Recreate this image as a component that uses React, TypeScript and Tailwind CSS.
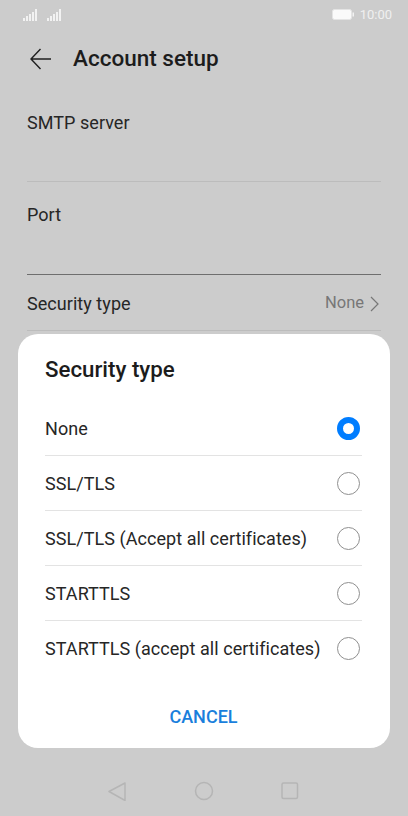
const options = [
  'None',
  'SSL/TLS',
  'SSL/TLS (Accept all certificates)',
  'STARTTLS',
  'STARTTLS (accept all certificates)',
]

function Signal() {
  return (
    <svg width="14" height="12" viewBox="0 0 14 12" fill="#f2f2f2">
      <rect x="0" y="9" width="2" height="3" />
      <rect x="3" y="7" width="2" height="5" />
      <rect x="6" y="5" width="2" height="7" />
      <rect x="9" y="3" width="2" height="9" />
      <rect x="12" y="0" width="2" height="12" />
    </svg>
  )
}

function StatusBar() {
  return (
    <div className="h-[28px] flex items-center justify-between pl-[23px] pr-[16px] pt-[1px]">
      <div className="flex gap-[10px]">
        <Signal />
        <Signal />
      </div>
      <div className="flex items-center gap-[6px]">
        <svg width="22" height="11" viewBox="0 0 22 11">
          <rect x="0.5" y="0.5" width="19" height="10" rx="2" fill="#fafafa" stroke="#e4e4e4" />
          <rect x="20.5" y="3.5" width="1.5" height="4" fill="#f2f2f2" />
        </svg>
        <span className="text-[13px] leading-none text-[#f0f0f0]">10:00</span>
      </div>
    </div>
  )
}

function Field({ label, dark }: { label: string; dark?: boolean }) {
  return (
    <div className={`pt-[21px] border-b ${dark ? 'h-[93px] border-[#6e6e6e]' : 'h-[92px] border-[#bcbcbc]'}`}>
      <div className="text-[18px] tracking-[0.05px] leading-[24px] text-[#262626]">{label}</div>
    </div>
  )
}

function Radio({ checked }: { checked: boolean }) {
  if (checked) {
    return <div className="w-[23px] h-[23px] mr-[2px] rounded-full border-[6px] border-[#007dff] bg-white" />
  }
  return <div className="w-[23px] h-[23px] mr-[2px] rounded-full border border-[#8f8f8f] bg-white" />
}

export default function App() {
  return (
    <div
      className="relative w-[408px] h-[816px] overflow-hidden bg-[#cccccc]"
      style={{ fontFamily: 'Roboto, sans-serif' }}
    >
      <StatusBar />

      <div className="h-[62px] flex items-center pl-[30px]">
        <svg width="21" height="22" viewBox="0 0 21 22" fill="none" stroke="#1f1f1f" strokeWidth="1.4">
          <path d="M21 11 H1 M10.5 1 L1 11 L10.5 21" />
        </svg>
        <h1 className="ml-[22px] text-[22.5px] font-medium text-[#1c1c1c]">Account setup</h1>
      </div>

      <div className="mx-[27px]">
        <Field label="SMTP server" />
        <Field label="Port" dark />
        <div className="h-[56px] flex items-center justify-between border-b border-[#bcbcbc] pt-[2px]">
          <span className="text-[18px] tracking-[0.05px] text-[#262626]">Security type</span>
          <div className="flex items-center text-[#777777]">
            <span className="text-[16.5px]">None</span>
            <svg width="11" height="16" viewBox="0 0 11 16" fill="none" stroke="#777777" strokeWidth="1.2" className="ml-[5px] mr-[1px]">
              <path d="M2 1 L9 8 L2 15" />
            </svg>
          </div>
        </div>
      </div>

      {/* dialog over the page */}
      <div className="absolute left-[18px] top-[334px] w-[372px] h-[414px] bg-white rounded-[20px] pl-[27px] pr-[28px]">
        <h2 className="pt-[21px] h-[67px] text-[22.3px] leading-[28px] font-medium text-[#1c1c1c]">Security type</h2>
        <ul>
          {options.map((o, i) => (
            <li
              key={o}
              className={`h-[55px] flex items-center justify-between ${i < options.length - 1 ? 'border-b border-[#e3e3e3]' : ''}`}
            >
              <span className="text-[18px] tracking-[0.05px] text-[#262626]">{o}</span>
              <Radio checked={i === 0} />
            </li>
          ))}
        </ul>
        <div className="mt-[29px] text-center text-[18px] leading-[24px] font-medium text-[#1a7fdc]">CANCEL</div>
      </div>

      {/* nav bar */}
      <div className="absolute top-[781px] left-[107px] w-[193px] flex justify-between items-center">
        <svg width="20" height="20" viewBox="0 0 20 20" fill="none" stroke="#b5b5b5" strokeWidth="1.5" strokeLinejoin="round">
          <path d="M18 2 L2 10.5 L18 19.5 Z" />
        </svg>
        <svg width="20" height="20" viewBox="0 0 20 20" fill="none" stroke="#b5b5b5" strokeWidth="1.5">
          <circle cx="10" cy="10" r="8.5" />
        </svg>
        <svg width="20" height="20" viewBox="0 0 20 20" fill="none" stroke="#b5b5b5" strokeWidth="1.5">
          <rect x="2" y="2" width="15.5" height="15.5" rx="1.5" />
        </svg>
      </div>
    </div>
  )
}
